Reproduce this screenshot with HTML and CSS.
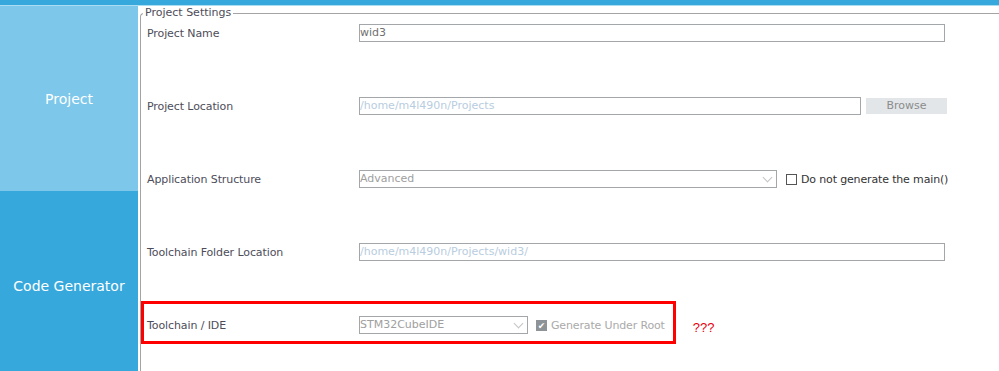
FILE: index.html
```html
<!DOCTYPE html>
<html lang="en">
  <head>
    <meta charset="UTF-8" />
    <title>Project Manager</title>
    <link rel="stylesheet" href="styles.css">
  </head>
  <body>
    <div class="topbar"></div>
    <div class="layout">
      <div class="sidebar">
        <div class="tile tile-project">Project</div>
        <div class="tile tile-code">Code Generator</div>
      </div>
      <div class="main">
        <fieldset class="settings">
          <legend>Project Settings</legend>

          <div class="row">
            <div class="label">Project Name</div>
            <div class="field field-name">wid3</div>
          </div>

          <div class="row">
            <div class="label">Project Location</div>
            <div class="field field-location disabled">/home/m4l490n/Projects</div>
            <div class="button">Browse</div>
          </div>

          <div class="row">
            <div class="label">Application Structure</div>
            <div class="select select-app">
              <span>Advanced</span>
              <span class="chevron"></span>
            </div>
            <div class="check">
              <span class="box"></span>
              <span>Do not generate the main()</span>
            </div>
          </div>

          <div class="row">
            <div class="label">Toolchain Folder Location</div>
            <div class="field field-name disabled">/home/m4l490n/Projects/wid3/</div>
          </div>

          <div class="row row-marked">
            <div class="label">Toolchain / IDE</div>
            <div class="select select-ide">
              <span>STM32CubeIDE</span>
              <span class="chevron"></span>
            </div>
            <div class="check check-off">
              <span class="box checked">&#10004;</span>
              <span>Generate Under Root</span>
            </div>
            <div class="question">???</div>
            <div class="marker"></div>
          </div>
        </fieldset>
      </div>
    </div>
  </body>
</html>
```

FILE: styles.css
```css
* {
  margin: 0;
  padding: 0;
  box-sizing: border-box;
}
body {
  font-family: "DejaVu Sans", "Liberation Sans", sans-serif;
  font-size: 11px;
  color: #4d4d5a;
  background: #fff;
  overflow: hidden;
}
.topbar {
  height: 6px;
  background: #36a8dc;
  border-bottom: 1px solid #aadcf2;
}
.layout {
  display: flex;
  height: 365px;
}
.sidebar {
  width: 138px;
  display: flex;
  flex-direction: column;
}
.tile {
  display: flex;
  align-items: center;
  justify-content: center;
  color: #fff;
  font-size: 14px;
}
.tile-project {
  height: 185px;
  background: #7cc7ea;
}
.tile-code {
  flex: 1;
  padding-top: 10px;
  background: #36a8dc;
}
.main {
  flex: 1;
  padding-left: 2px;
  overflow: hidden;
}
.settings {
  margin-top: 1px;
  height: 400px;
  border: 1px solid #a4a4a4;
  border-right: none;
  border-radius: 4px 0 0 0;
  padding: 2px 0 0 0;
}
.settings legend {
  margin-left: 2px;
  padding: 0 2px;
  line-height: 12px;
  color: #4d4d5a;
}
.row {
  position: relative;
  display: flex;
  align-items: center;
  height: 24px;
  margin-bottom: 49px;
  padding-left: 6px;
}
.label {
  width: 212px;
  flex: none;
  letter-spacing: -0.1px;
}
.field,
.select {
  height: 18px;
  border: 1px solid #a3a7aa;
  line-height: 16px;
  color: #707070;
  white-space: nowrap;
  overflow: hidden;
}
.field-name {
  width: 586px;
}
.field-location {
  width: 502px;
}
.disabled {
  color: #b8cde0;
}
.button {
  margin-left: 5px;
  width: 81px;
  height: 16px;
  line-height: 16px;
  background: #e2e6e9;
  color: #8c8c8c;
  text-align: center;
}
.select {
  display: flex;
  justify-content: space-between;
  align-items: center;
  color: #a0a0a0;
  padding-right: 5px;
}
.select-app {
  width: 418px;
}
.select-ide {
  width: 169px;
}
.chevron {
  width: 7px;
  height: 7px;
  border-right: 1px solid #c4c4c4;
  border-bottom: 1px solid #c4c4c4;
  transform: translateY(-2px) rotate(45deg);
}
.check {
  display: flex;
  align-items: center;
  margin-left: 9px;
  color: #333;
  letter-spacing: -0.15px;
}
.box {
  width: 11px;
  height: 11px;
  border: 1px solid #555;
  margin-right: 4px;
}
.checked {
  background: #8e9397;
  border-color: #8e9397;
  color: #fff;
  font-size: 9px;
  line-height: 10px;
  text-align: center;
}
.check-off {
  margin-left: 8px;
  color: #aaa;
}
.question {
  margin-left: 28px;
  margin-top: 4px;
  color: #e8000b;
  font-family: "Liberation Sans", sans-serif;
  font-size: 13px;
}
.marker {
  position: absolute;
  left: 0;
  top: -12px;
  width: 535px;
  height: 43px;
  border: 3px solid #ff0000;
}
```
